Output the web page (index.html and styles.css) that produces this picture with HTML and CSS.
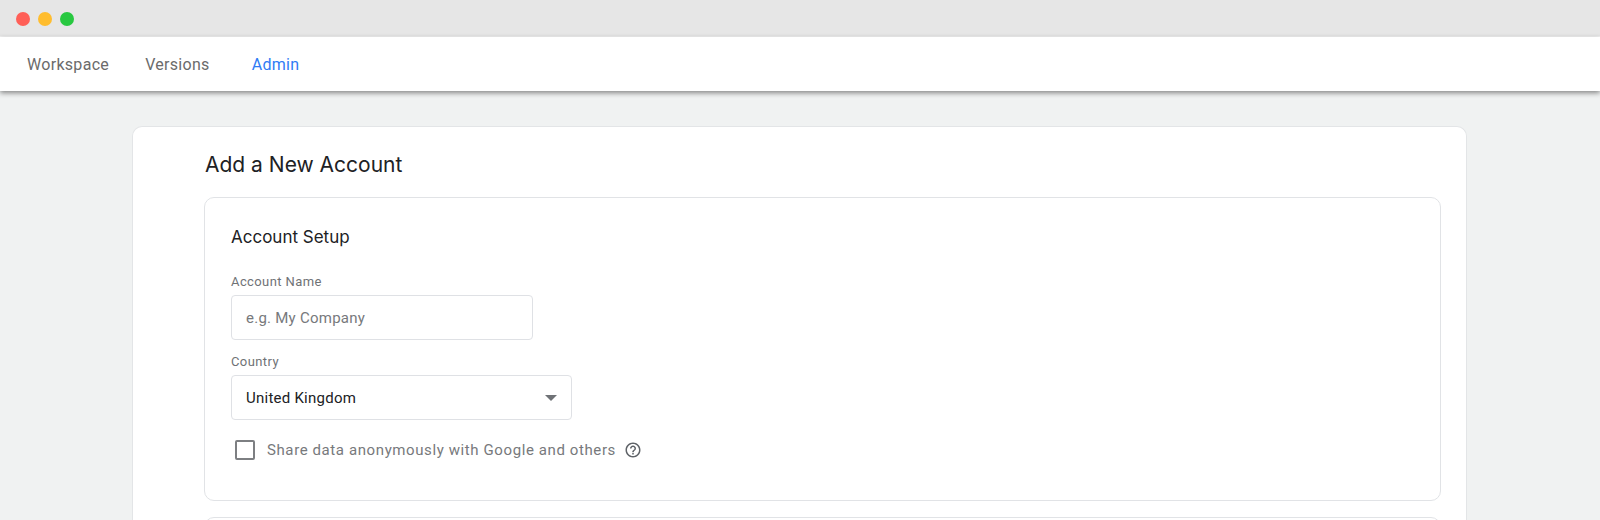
FILE: index.html
```html
<!DOCTYPE html>
<html lang="en">
<head>
    <meta charset="UTF-8">
    <title>Add a New Account</title>
    <link rel="stylesheet" href="styles.css">
</head>
<body>
<div class="titlebar">
    <span class="light red"></span>
    <span class="light yellow"></span>
    <span class="light green"></span>
</div>
<nav class="tabs">
    <a class="tab workspace">Workspace</a>
    <a class="tab versions">Versions</a>
    <a class="tab active">Admin</a>
</nav>
<main class="page">
    <div class="card">
        <h1>Add a New Account</h1>
        <section class="panel">
            <h2>Account Setup</h2>
            <label class="field-label" for="account-name">Account Name</label>
            <input class="text-input" id="account-name" type="text" placeholder="e.g. My Company">
            <label class="field-label country-label">Country</label>
            <div class="select">
                <span>United Kingdom</span>
                <span class="arrow"></span>
            </div>
            <div class="share">
                <span class="checkbox"></span>
                <span class="share-text">Share data anonymously with Google and others</span>
                <svg class="help" viewBox="0 0 24 24" width="18" height="18">
                    <path fill="#5f6368" d="M11 18h2v-2h-2v2zm1-16C6.48 2 2 6.48 2 12s4.48 10 10 10 10-4.48 10-10S17.52 2 12 2zm0 18c-4.41 0-8-3.59-8-8s3.59-8 8-8 8 3.59 8 8-3.59 8-8 8zm0-14c-2.21 0-4 1.79-4 4h2c0-1.1.9-2 2-2s2 .9 2 2c0 2-3 1.75-3 5h2c0-2.25 3-2.5 3-5 0-2.21-1.79-4-4-4z"/>
                </svg>
            </div>
        </section>
        <section class="panel next"></section>
    </div>
</main>
</body>
</html>
```

FILE: styles.css
```css
/* page */
html, body {
    height: 520px;
    overflow: hidden;
}
body {
    margin: 0;
    background-color: #f0f2f2;
    font-family: Roboto, Arial, sans-serif;
}

/* window bar */
.titlebar {
    display: flex;
    align-items: center;
    gap: 8px;
    height: 37px;
    padding: 1px 0 0 15.5px;
    box-sizing: border-box;
    background-color: #e6e6e6;
    border-bottom: 1px solid #f4f4f4;
}
.light {
    width: 14px;
    height: 14px;
    border-radius: 50%;
}
.red { background-color: #ff5f57; }
.yellow { background-color: #ffbd2e; }
.green { background-color: #28c840; }

/* tabs */
.tabs {
    position: relative;
    display: flex;
    align-items: center;
    height: 54px;
    padding: 0 0 0 27px;
    box-sizing: border-box;
    background-color: #fff;
    box-shadow: 0 2px 5px rgba(0, 0, 0, 0.45);
}
.tab {
    font-size: 16px;
    letter-spacing: 0.3px;
    color: #6b6b6b;
}
.workspace { margin-right: 36px; }
.versions { margin-right: 42px; }
.active { color: #2f7bf5; }

/* main card */
.page {
    height: 429px;
    padding: 35px 133px 0 132px;
    box-sizing: border-box;
}
.card {
    height: 394px;
    padding: 0 25px 0 71px;
    box-sizing: border-box;
    overflow: hidden;
    background-color: #fff;
    border: 1px solid #e3e5e7;
    border-bottom: none;
    border-radius: 10px 10px 0 0;
}
h1 {
    margin: 24px 0 18px 1px;
    font-family: Inter, Roboto, sans-serif;
    font-size: 21px;
    font-weight: 400;
    line-height: 28px;
    color: #202124;
}
.panel {
    height: 304px;
    padding: 28px 26px 0;
    box-sizing: border-box;
    background-color: #fff;
    border: 1px solid #e1e3e6;
    border-radius: 10px;
}
.next {
    height: 20px;
    margin-top: 16px;
}
h2 {
    margin: 0 0 26px;
    font-family: Inter, Roboto, sans-serif;
    font-size: 17px;
    font-weight: 400;
    line-height: 22px;
    color: #202124;
}

/* form */
.field-label {
    display: block;
    font-size: 13px;
    line-height: 16px;
    letter-spacing: 0.4px;
    color: #6f7276;
}
.text-input {
    display: block;
    width: 302px;
    height: 45px;
    margin-top: 5px;
    padding: 0 14px;
    box-sizing: border-box;
    font-family: Roboto, Arial, sans-serif;
    font-size: 15px;
    letter-spacing: 0.25px;
    background-color: #fff;
    border: 1px solid #dfe1e5;
    border-radius: 4px;
    outline: none;
}
.text-input::placeholder {
    color: #77797c;
    opacity: 1;
}
.country-label {
    margin-top: 14px;
}
.select {
    display: flex;
    align-items: center;
    justify-content: space-between;
    width: 341px;
    height: 45px;
    margin-top: 5px;
    padding: 0 14px;
    box-sizing: border-box;
    font-size: 15px;
    letter-spacing: 0.25px;
    color: #202124;
    border: 1px solid #dfe1e5;
    border-radius: 4px;
}
.arrow {
    width: 0;
    height: 0;
    border-left: 6px solid transparent;
    border-right: 6px solid transparent;
    border-top: 6px solid #6f7276;
}
.share {
    display: flex;
    align-items: center;
    height: 20px;
    margin: 20px 0 0 4px;
}
.checkbox {
    width: 20px;
    height: 20px;
    box-sizing: border-box;
    border: 2px solid #7d7f82;
    border-radius: 2px;
}
.share-text {
    margin-left: 12px;
    font-size: 15px;
    letter-spacing: 0.6px;
    color: #77797c;
}
.help {
    margin-left: 8px;
}
```
